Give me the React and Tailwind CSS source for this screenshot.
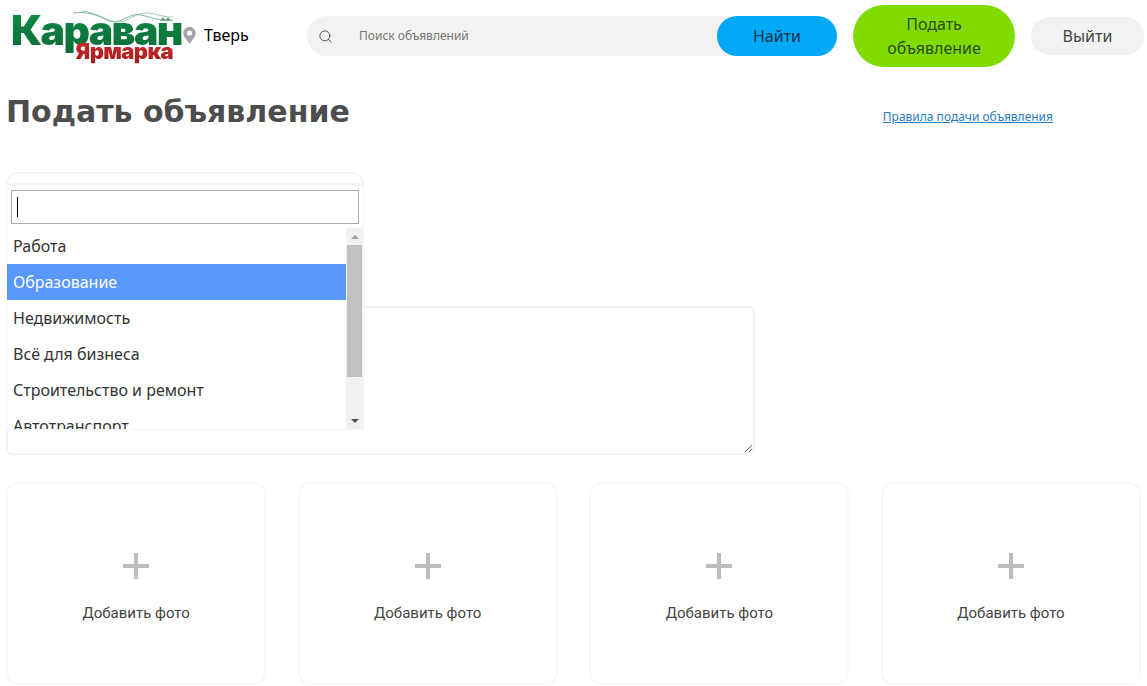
import React from 'react';
import { Search } from 'lucide-react';

const CATEGORIES = ['Работа', 'Образование', 'Недвижимость', 'Всё для бизнеса', 'Строительство и ремонт', 'Автотранспорт'];

const Logo = () => (
  <div className="relative h-[52px] w-[162px] shrink-0 font-['Inter',sans-serif]">
    <svg className="absolute left-[62px] top-0" width="100" height="16" viewBox="0 0 100 16" fill="none">
      <path d="M0 4C14 2 24 6 36 12C48 16 56 3 68 6C78 8 84 12 100 11" stroke="#5f9f80" strokeWidth="0.8" />
      <path d="M8 2C22 3 32 10 42 13C54 14 60 5 72 4C82 4 88 8 100 8" stroke="#8cbba5" strokeWidth="0.8" />
      <path d="M87 12l3-4 3 4zM92 12l3-4 3 4z" fill="#6f9f88" />
    </svg>
    <span className="absolute left-0 top-[-3px] bg-linear-to-b from-[#0f8f48] to-[#0a6b36] bg-clip-text text-[41px] leading-[48px] font-black tracking-[-1.6px] whitespace-nowrap text-transparent">
      Караван
    </span>
    <span className="absolute right-0 top-[29px] bg-linear-to-b from-[#d42c2c] to-[#a31c1c] bg-clip-text text-[22px] leading-[26px] font-black tracking-[-0.6px] whitespace-nowrap text-transparent">
      Ярмарка
    </span>
  </div>
);

const Pin = () => (
  <svg width="13" height="17" viewBox="0 0 13 17" className="shrink-0">
    <path
      fillRule="evenodd"
      d="M6.5 0C3 0 .3 2.7.3 6.1.3 9.8 4.6 14.4 6.5 17c1.9-2.6 6.2-7.2 6.2-10.9C12.7 2.7 10 0 6.5 0zm0 3.5a2.6 2.6 0 1 1 0 5.2 2.6 2.6 0 0 1 0-5.2z"
      fill="#a3a3a3"
    />
  </svg>
);

const Header = () => (
  <header className="flex h-[72px] items-start pl-[11px]">
    <div className="mt-[9px]">
      <Logo />
    </div>
    <div className="mt-[27px] ml-[10px] flex w-[124px] shrink-0 items-center gap-[8px]">
      <Pin />
      <span className="text-[16px] leading-[17px] text-black">Тверь</span>
    </div>
    <div className="mt-[16px] flex h-[40px] w-[530px] shrink-0 items-center rounded-[20px] bg-[#f2f2f2]">
      <Search size={15} strokeWidth={1.3} className="ml-[11px] text-[#333]" />
      <span className="ml-[26px] flex-1 text-[12px] text-[#757575]">Поиск объявлений</span>
      <button className="h-[40px] w-[120px] rounded-[20px] bg-[#00a8f5] text-[16px] text-[#16324a]">Найти</button>
    </div>
    <button className="mt-[5px] ml-[16px] h-[62px] w-[162px] shrink-0 rounded-[31px] bg-[#80dc00] text-[16px] leading-[24px] text-[#2f4d1a]">
      Подать
      <br />
      объявление
    </button>
    <button className="mt-[17px] ml-[16px] h-[38px] w-[113px] shrink-0 rounded-[19px] bg-[#f2f2f2] text-[16px] text-[#444]">Выйти</button>
  </header>
);

const CategoryDropdown = () => (
  <div className="absolute top-[11px] left-0 flex h-[247px] w-[358px] flex-col border border-t-[3px] border-[#f5f5f5] bg-white">
    <div className="px-[4px] pt-[4px]">
      <div className="flex h-[34px] items-center border border-[#aaa] pl-[5px]">
        <div className="h-[20px] w-px bg-black" />
      </div>
    </div>
    <div className="mt-[4px] flex min-h-0 flex-1">
      <ul className="min-w-0 flex-1 overflow-hidden">
        {CATEGORIES.map((name) => (
          <li
            key={name}
            className={`flex h-[36px] shrink-0 items-center pl-[6px] text-[16px] ${
              name === 'Образование' ? 'bg-[#5897fb] text-white' : 'text-[#333]'
            }`}
          >
            {name}
          </li>
        ))}
      </ul>
      <div className="flex w-[17px] shrink-0 flex-col items-center bg-[#f1f1f1]">
        <div className="flex h-[17px] w-full items-center justify-center">
          <div className="h-0 w-0 border-x-[4px] border-b-[4px] border-x-transparent border-b-[#a3a3a3]" />
        </div>
        <div className="h-[132px] w-[15px] bg-[#c1c1c1]" />
        <div className="flex-1" />
        <div className="flex h-[17px] w-full items-center justify-center">
          <div className="h-0 w-0 border-x-[4px] border-t-[4px] border-x-transparent border-t-[#505050]" />
        </div>
      </div>
    </div>
  </div>
);

const PhotoCard = () => (
  <button className="flex h-[203px] flex-col items-center rounded-[12px] border-2 border-[#f8f8f8] bg-white pt-[68px]">
    <svg width="28" height="28" viewBox="0 0 28 28">
      <path d="M12 1h4v11h11v4H16v11h-4V16H1v-4h11z" fill="#bdbdbd" />
    </svg>
    <span className="mt-[23px] font-['Roboto',sans-serif] text-[15px] leading-[20px] text-[#444]">Добавить фото</span>
  </button>
);

export default function App() {
  return (
    <div className="h-[686px] w-[1147px] overflow-hidden bg-white font-['Noto_Sans',sans-serif]">
      <Header />
      <main className="px-[6px]">
        <div className="flex h-[100px] items-start justify-between pr-[88px]">
          <h1 className="mt-[19px] font-['DejaVu_Sans',sans-serif] text-[30px] leading-[42px] font-bold text-[#4d4d4d]">
            Подать объявление
          </h1>
          <a href="#" className="mt-[36px] text-[12px] leading-[17px] text-[#2a7bc0] underline">
            Правила подачи объявления
          </a>
        </div>
        <form className="relative">
          <div className="h-[134px]">
            <div className="h-[40px] w-[358px] rounded-[12px] border-2 border-[#f5f5f5]" />
          </div>
          <textarea className="block h-[149px] w-[749px] rounded-[6px] border-2 border-[#f2f2f2] bg-white" />
          <CategoryDropdown />
          <div className="mt-[27px] grid grid-cols-4 gap-[31.5px]">
            <PhotoCard />
            <PhotoCard />
            <PhotoCard />
            <PhotoCard />
          </div>
        </form>
      </main>
    </div>
  );
}
